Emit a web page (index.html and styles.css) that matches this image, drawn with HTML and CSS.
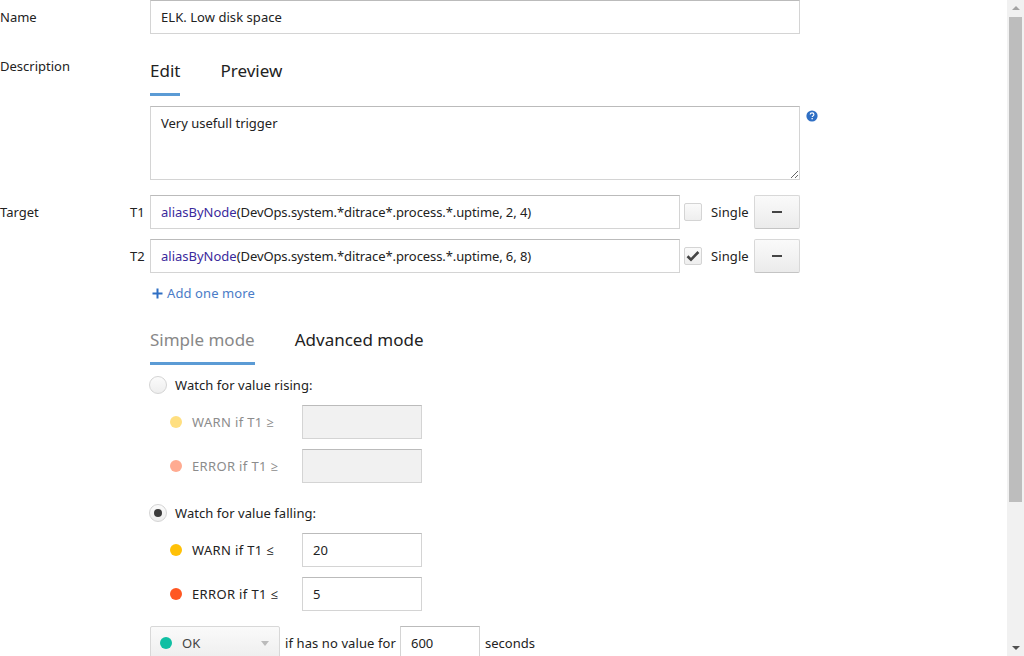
FILE: index.html
```html
<!DOCTYPE html>
<html lang="en">
<head>
<meta charset="utf-8">
<title>Trigger</title>
<link rel="stylesheet" href="styles.css">
</head>
<body>
<div class="page">
  <main class="form">
    <div class="row row-name">
      <div class="label">Name</div>
      <div class="content"><input class="input wide" type="text" value="ELK. Low disk space"></div>
    </div>
    <div class="row row-desc">
      <div class="label label-desc">Description</div>
      <div class="content">
        <div class="tabs tabs-desc">
          <span class="tab tab-active-dark">Edit</span>
          <span class="tab tab-dark">Preview</span>
        </div>
        <div class="desc-body">
          <textarea class="input area">Very usefull trigger</textarea>
          <svg class="help" width="12" height="12" viewBox="0 0 12 12"><circle cx="6" cy="6" r="5.6" fill="#2f6fc4"/><path d="M4.2 4.6c0-1.1.8-1.7 1.9-1.7 1 0 1.8.6 1.8 1.5 0 .7-.4 1.1-1 1.5-.5.3-.7.5-.7 1.1" fill="none" stroke="#fff" stroke-width="1.2"/><rect x="5.5" y="8" width="1.3" height="1.3" fill="#fff"/></svg>
        </div>
      </div>
    </div>
    <div class="row row-target">
      <div class="label">Target</div>
      <div class="targets">
        <div class="target">
          <span class="tname">T1</span>
          <div class="input code"><span class="fn">aliasByNode</span><span class="args">(DevOps.system.*ditrace*.process.*.uptime, 2, 4)</span></div>
          <span class="check"></span>
          <span class="single">Single</span>
          <button class="minus" type="button"><span class="dash"></span></button>
        </div>
        <div class="target">
          <span class="tname">T2</span>
          <div class="input code"><span class="fn">aliasByNode</span><span class="args">(DevOps.system.*ditrace*.process.*.uptime, 6, 8)</span></div>
          <span class="check">
            <svg width="14" height="12" viewBox="0 0 14 12"><path d="M1.5 6.2 5 9.6 12.4 2" fill="none" stroke="#444" stroke-width="2.6"/></svg>
          </span>
          <span class="single">Single</span>
          <button class="minus" type="button"><span class="dash"></span></button>
        </div>
        <div class="add"><svg width="11" height="11" viewBox="0 0 11 11"><path d="M5.5 0.5v10M0.5 5.5h10" stroke="#2f6fc4" stroke-width="2"/></svg><span class="add-text">Add one more</span></div>
      </div>
    </div>
    <div class="row">
      <div class="label"></div>
      <div class="content">
        <div class="tabs tabs-mode">
          <span class="tab tab-active-grey">Simple mode</span>
          <span class="tab tab-dark">Advanced mode</span>
        </div>
        <div class="watch watch-rising">
          <span class="radio"></span><span>Watch for value rising:</span>
        </div>
        <div class="level level-off">
          <span class="dot dot-warn-off"></span><span class="level-label">WARN if T1 ≥</span>
          <input class="input num off" type="text" disabled>
        </div>
        <div class="level level-off">
          <span class="dot dot-error-off"></span><span class="level-label">ERROR if T1 ≥</span>
          <input class="input num off" type="text" disabled>
        </div>
        <div class="watch watch-falling">
          <span class="radio"><span class="radio-on"></span></span><span>Watch for value falling:</span>
        </div>
        <div class="level">
          <span class="dot dot-warn"></span><span class="level-label">WARN if T1 ≤</span>
          <input class="input num" type="text" value="20">
        </div>
        <div class="level">
          <span class="dot dot-error"></span><span class="level-label">ERROR if T1 ≤</span>
          <input class="input num" type="text" value="5">
        </div>
        <div class="novalue">
          <div class="select"><span class="dot dot-ok"></span><span class="select-text">OK</span><span class="caret"></span></div>
          <span class="nv-a">if has no value for</span>
          <input class="input secs" type="text" value="600">
          <span class="nv-b">seconds</span>
        </div>
      </div>
    </div>
  </main>
  <aside class="scrollbar">
    <span class="arrow arrow-up"></span>
    <div class="thumb"></div>
    <span class="arrow arrow-down"></span>
  </aside>
</div>
</body>
</html>
```

FILE: styles.css
```css
* { box-sizing: border-box; }
html, body { margin: 0; height: 656px; overflow: hidden; background: #fff; }
body { font: 13px/20px "Noto Sans", "Open Sans", sans-serif; color: #222; }
.page { display: flex; height: 656px; }
.form { flex: 1; min-width: 0; overflow: hidden; }
.row { display: flex; }
.label { width: 150px; flex: none; }
.content { width: 650px; flex: none; }

.input {
  display: block;
  font: inherit;
  color: #222;
  height: 34px;
  padding: 0 10px;
  border: 1px solid #d4d4d4;
  border-top-color: #bbb;
  border-radius: 0;
  background: #fff;
  outline: none;
}
.wide { width: 650px; letter-spacing: 0.05px; }
.row-name .label { padding-top: 7px; }
.row-desc { margin-top: 16px; }
.label-desc { padding-top: 6px; }
.tabs { display: flex; font-size: 17px; }
.tab { display: block; height: 46px; padding-top: 10px; line-height: 22px; border-bottom: 3px solid transparent; }
.tabs-desc { gap: 40px; height: 46px; }
.tab-dark { color: #222; }
.tab-active-dark { color: #222; border-bottom-color: #5b9bd5; }
.desc-body { display: flex; gap: 6px; margin-top: 10px; }
.area { width: 650px; height: 74px; padding: 6px 10px; resize: vertical; flex: none; }
.help { margin-top: 4px; flex: none; }

.row-target { margin-top: 15px; }
.row-target .label { padding-top: 7px; }
.targets { width: 670px; margin-left: -20px; }
.target { display: flex; align-items: center; height: 34px; margin-bottom: 10px; }
.tname { width: 20px; flex: none; }
.code { width: 530px; line-height: 32px; white-space: nowrap; flex: none; }
.fn { color: #3b2a9c; }
.args { letter-spacing: -0.09px; }
.check {
  display: flex; align-items: center; justify-content: center;
  width: 18px; height: 18px; margin-left: 4px; flex: none;
  border: 1px solid #d4d4d4; border-radius: 2px;
  background: linear-gradient(#fafafa, #eee);
}
.single { margin-left: 9px; width: 43px; flex: none; letter-spacing: 0.1px; }
.minus {
  display: flex; align-items: center; justify-content: center;
  width: 46px; height: 34px; padding: 0; flex: none;
  border: 1px solid #d8d8d8; border-bottom-color: #c4c4c4; border-radius: 2px;
  background: linear-gradient(#fafafa, #ebebeb);
}
.dash { display: block; width: 10px; height: 2px; background: #444; }
.add { display: flex; align-items: center; gap: 4px; margin-left: 22px; height: 20px; color: #4a7cc7; }
.add-text { letter-spacing: 0.1px; }

.tabs-mode { gap: 40px; height: 46px; margin-top: 16px; font-size: 17px; }
.tabs-mode .tab { padding-top: 10px; }
.tab-active-grey { color: #888; border-bottom-color: #5b9bd5; }
.watch { display: flex; align-items: center; gap: 8px; height: 20px; margin-left: -1px; letter-spacing: 0.05px; }
.watch-rising { margin-top: 10px; }
.watch-falling { margin-top: 20px; }
.radio {
  display: flex; align-items: center; justify-content: center;
  width: 18px; height: 18px; flex: none;
  border: 1px solid #d4d4d4; border-radius: 50%;
  background: linear-gradient(#fbfbfb, #eee);
}
.radio-on { display: block; width: 8px; height: 8px; border-radius: 50%; background: #3c3c3c; }
.level { display: flex; align-items: center; height: 34px; margin-top: 10px; margin-left: 20px; }
.watch + .level { margin-top: 10px; }
.level-off .level-label { color: #8c8c8c; }
.dot { display: block; width: 12px; height: 12px; border-radius: 50%; flex: none; }
.dot-warn-off { background: #ffdf80; }
.dot-error-off { background: #ffab91; }
.dot-warn { background: #ffc107; }
.dot-error { background: #ff5722; }
.dot-ok { background: #10bfa3; }
.level-label { margin-left: 10px; width: 110px; flex: none; letter-spacing: 0.35px; }
.num { width: 120px; }
.off { background: #f1f1f1; }
.novalue { display: flex; align-items: center; height: 34px; margin-top: 15px; }
.select {
  display: flex; align-items: center;
  width: 130px; height: 34px; padding-left: 9px; flex: none;
  border: 1px solid #d8d8d8; border-radius: 2px;
  background: linear-gradient(#fafafa, #eee);
}
.select-text { margin-left: 10px; color: #444; flex: 1; }
.caret { width: 0; height: 0; margin-right: 10px; border: 4px solid transparent; border-top: 5px solid #bbb; border-bottom: 0; }
.nv-a { margin-left: 5px; width: 115px; flex: none; letter-spacing: 0.1px; }
.secs { width: 80px; flex: none; }
.nv-b { margin-left: 5px; }

.scrollbar {
  width: 17px; flex: none; height: 656px;
  display: flex; flex-direction: column; align-items: center;
  background: #f1f1f1;
}
.arrow { display: block; width: 0; height: 0; border: 4px solid transparent; flex: none; }
.arrow-up { margin-top: 6px; border-bottom: 4px solid #a3a3a3; border-top: 0; }
.thumb { width: 13px; height: 485px; margin-top: 7px; background: #bdbdbd; flex: none; }
.arrow-down { margin-top: auto; margin-bottom: 6px; border-top: 4px solid #505050; border-bottom: 0; }
```
